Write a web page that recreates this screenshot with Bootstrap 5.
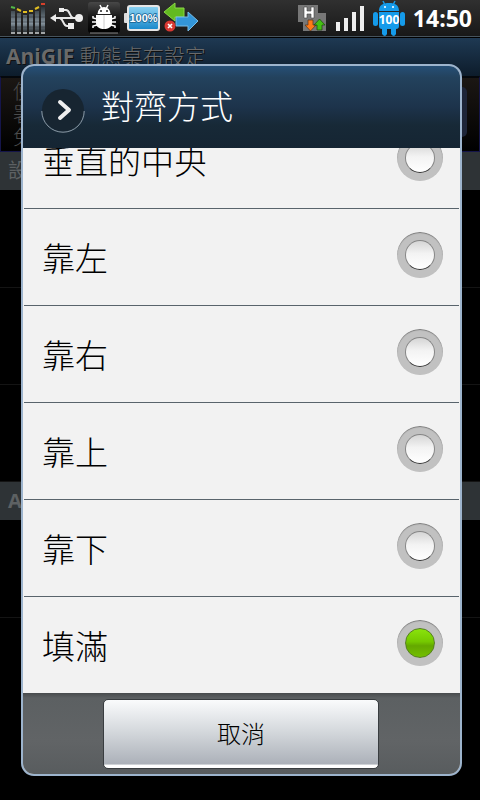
<!DOCTYPE html>
<html lang="zh-Hant">
<head>
<meta charset="utf-8">
<meta name="viewport" content="width=device-width, initial-scale=1">
<title>AniGIF 動態桌布設定</title>
<link href="https://cdn.jsdelivr.net/npm/bootstrap@5.3.0/dist/css/bootstrap.min.css" rel="stylesheet">
<style>
body{font-family:"Open Sans","Noto Sans CJK TC",sans-serif;background:#000;min-height:100vh}
.status-bar{height:36px;background:linear-gradient(#303030,#181818);padding:0 8px 0 10px;color:#fff}
.status-bar svg{display:block;flex:none}
.clock{font-size:23px;line-height:38px;font-weight:700}
.title-bar{height:40px;border-top:1px solid #46535c;background:linear-gradient(#1f3a54,#0d1c2b);box-shadow:inset 0 1px #000;padding:0 6px;font-size:21px;line-height:38px;color:#6a6a6a;text-shadow:1px 1px #111;font-weight:300}
.title-bar b{font-weight:700}
.pref-top{height:76px;border:1px solid #15154a;border-top:2px solid #05080c;background:linear-gradient(#1b1714,#000);padding:2px 12px;font-size:20px;line-height:23px;color:#4c4c4c;font-weight:300}
.pref-top .scroll-thumb{width:10px;height:50px;margin-top:7px;border-radius:6px;background:#1d2437}
.pref-text{width:24px}
.section-head{height:38px;margin-bottom:1px;background:#2e3336;color:#5d6163;font-size:20px;line-height:38px;padding:0 8px}
.pref-row{height:97px;border-bottom:1px solid #141414}
.overlay{padding:64px 18px 24px 21px}
.dialog{border:2px solid #9db4cd;border-radius:13px;background:#f2f2f2;overflow:hidden}
.dialog-head{height:82px;background:linear-gradient(#264f76,#23425d 14%,#1d334b 50%,#172937 72%,#152533);padding:0 18px;color:#fff}
.dialog-head h1{font-size:33px;line-height:40px;font-weight:300}
.option-list{min-height:0;background:#f2f2f2}
.option{height:97px;flex:none;margin:0 1px;padding:0 16px 0 18px;border-bottom:1px solid #59646c;color:#000;font-size:33px;line-height:48px;font-weight:300}
.option:last-child{height:96px;border-bottom:0}
.option label{padding-top:4px}
.radio-dot{appearance:none;width:46px;height:46px;margin:0 0 4px;border-radius:50%;background:radial-gradient(circle,transparent 14px,#c1c1c1 15px),linear-gradient(#cfcfcf,#fff 75%);box-shadow:inset 0 1px 1px #777;display:grid;place-items:center}
.radio-dot::before{content:"";width:30px;height:30px;border-radius:50%;border:1px solid #858585;border-bottom-color:#333;background:linear-gradient(#d5d5d5,#f3f3f3 45%,#fff)}
.radio-dot:checked::before{border-color:#557c25;background:linear-gradient(#8ae30c,#75c900 45%,#64a800 60%,#73bf00)}
.dialog-foot{height:81px;padding-right:1px;background:linear-gradient(#484b4d,#5c6062 5px,#616466 60%,#585c5e)}
.cancel-btn{width:276px;height:70px;border:1px solid #393d40;border-radius:5px;background:linear-gradient(#fafbfc,#d5d9dd 45%,#acb1b9 94%,#fff 96%);color:#000;font-size:24px;line-height:30px;font-weight:300}
</style>
</head>
<body class="d-flex flex-column position-relative">
<header class="status-bar d-flex align-items-center">
<svg width="36" height="32" viewBox="0 0 36 32"><defs><linearGradient id="eq" x2="0" y2="1"><stop stop-color="#2b343a"/><stop offset=".65" stop-color="#84929c"/><stop offset="1" stop-color="#2c3236"/></linearGradient></defs>
<g fill="url(#eq)"><path d="M1 9h4v21H1zM7 11h4v19H7zM13 13h4v17h-4zM19 12h4v18h-4zM25 9h4v21h-4zM31 5h4v25h-4z"/></g>
<path d="M1 31h4M7 31h4M13 31h4M19 31h4M25 31h4M31 31h4" stroke="#d0d3d5" stroke-width="1.5"/><path d="M1 15h34M1 20h34M1 25h34" stroke="#151719" stroke-width=".4"/>
<path d="M1 5l4 1" stroke="#54b948" stroke-width="2"/><path d="M7 7l4 2M13 10h4M19 9h4M25 7l4-2" stroke="#e0bd22" stroke-width="2"/><path d="M31 2h4" stroke="#d6402b" stroke-width="2"/></svg>
<svg class="ms-1" width="34" height="26" viewBox="0 0 34 26"><path d="M5 13h24M12 5h4c4 0 3 6 7 8M19 21h-2c-4 0-3-6-7-8" fill="none" stroke="#e8e8e8" stroke-width="2"/><path d="M0 13l6-4v8zM18 18h6v6h-6zM9 3h5v4H9z" fill="#eee"/><circle cx="29" cy="13" r="4" fill="#eee"/></svg>
<svg class="ms-1" width="32" height="32" viewBox="0 0 32 32"><defs><linearGradient id="bg" x2="0" y2="1"><stop stop-color="#484848"/><stop offset=".5" stop-color="#161616"/><stop offset="1" stop-color="#000"/></linearGradient></defs><rect width="32" height="31" rx="3" fill="url(#bg)"/><path d="M2 31h28" stroke="#888"/><path d="M12 3l2 4M20 3l-2 4M9 17L5 16v-2M23 17l4-1v-2M9 20H4M23 20h5M9 23l-4 1v2M23 23l4 1v2" fill="none" stroke="#fff" stroke-width="1.500"/><path d="M9.500 12a6.500 7 0 0 1 13 0zM8 13h16v8c0 8-16 8-16 0z" fill="#fff"/><path d="M16 13v14" stroke="#ccc"/><circle cx="13" cy="9" r="1" fill="#222"/><circle cx="19" cy="9" r="1" fill="#222"/></svg>
<svg class="ms-1" width="36" height="26" viewBox="0 0 36 26"><defs><linearGradient id="ba" x2="0" y2="1"><stop stop-color="#8ed4f3"/><stop offset="1" stop-color="#1687ca"/></linearGradient></defs><rect y="8" width="5" height="10" rx="1" fill="#ddd"/><rect x="4" y="1" width="31" height="24" rx="2" fill="url(#ba)" stroke="#e6e6e6" stroke-width="2"/><text x="19.500" y="17" text-anchor="middle" font-family="Liberation Sans" font-weight="700" font-size="11" fill="#fff" stroke="#176292" stroke-width="1.500" paint-order="stroke">100%</text></svg>
<svg class="ms-1" width="36" height="32" viewBox="0 0 36 32"><path d="M0 10L11 1v5h9v9h-9v4z" fill="#62ba20" stroke="#8bd846"/><path d="M34 19L24 10v5h-12v9h12v5z" fill="#3396d9" stroke="#76bde8"/><circle cx="6" cy="24" r="5.500" fill="#d63832"/><path d="M4 22l4 4m0-4l-4 4" stroke="#fff" stroke-width="1.600"/></svg>
<svg class="ms-auto me-2" width="30" height="28" viewBox="0 0 30 28"><path d="M1 1h20v8h8v18H6v-9H1z" fill="#777"/><path d="M7 3h3v4h4V3h3v11h-3v-4h-4v4H7z" fill="#fff" stroke="#444" stroke-width=".6"/><path d="M11 16h5v5h3l-5.500 6L8 21h3z" fill="#ff7a17" stroke="#573016" stroke-width=".7"/><path d="M20 26h5v-5h3l-5.500-6L17 21h3z" fill="#45bf14" stroke="#17430a" stroke-width=".7"/></svg>
<svg width="30" height="26" viewBox="0 0 30 26"><path d="M1 17h4v9H1zM9 13h4v13H9zM17 7h4v19h-4zM25 1h4v25h-4z" fill="#eee"/></svg>
<svg class="ms-2 me-2" width="32" height="36" viewBox="0 0 32 36"><g fill="#159bea"><path d="M6 11C6 5 10 3 16 3s10 2 10 8zM6 12h20v14q0 3-3 3H9q-3 0-3-3zM9 28h5v6q-2 4-5 0zM18 28h5v6q-2 4-5 0z"/><rect y="12" width="5" height="14" rx="2.500"/><rect x="27" y="12" width="5" height="14" rx="2.500"/></g><path d="M10 1l2 4M22 1l-2 4" stroke="#159bea" stroke-width="1.500"/><circle cx="12" cy="7" r="1" fill="#fff"/><circle cx="20" cy="7" r="1" fill="#fff"/><text x="16" y="24" text-anchor="middle" font-family="Open Sans" font-weight="700" font-size="12" fill="#fff">100</text></svg>
<time class="clock">14:50</time>
</header>
<main aria-hidden="true">
<div class="title-bar"><b>AniGIF</b> 動態桌布設定</div>
<div class="pref-top d-flex justify-content-between"><div class="pref-text">使<br>署<br>免</div><div class="scroll-thumb"></div></div>
<div class="section-head">設定</div>
<div class="pref-row"></div><div class="pref-row"></div><div class="pref-row"></div>
<div class="section-head"><b>A</b></div>
<div class="pref-row"></div>
</main>
<div class="overlay position-absolute top-0 start-0 w-100 h-100">
<section class="dialog d-flex flex-column h-100" role="dialog" aria-labelledby="dialog-title">
<div class="dialog-head d-flex flex-shrink-0 align-items-center gap-3">
<svg class="mt-2" width="44" height="44" viewBox="0 0 44 44"><circle cx="22" cy="21" r="21" fill="#172531"/><path d="M.8 22a21.200 21.200 0 0 0 42.400 0" fill="none" stroke="#8d9ca8"/><path d="M19 13l9 8-9 8" fill="none" stroke="#eee" stroke-width="4" stroke-linecap="round" stroke-linejoin="round"/></svg>
<h1 class="m-0" id="dialog-title">對齊方式</h1>
</div>
<div class="option-list d-flex flex-column justify-content-end flex-grow-1 overflow-hidden">
<div class="option d-flex align-items-center"><label class="flex-grow-1" for="o1">垂直的中央</label><input class="radio-dot" type="radio" name="align" id="o1"></div>
<div class="option d-flex align-items-center"><label class="flex-grow-1" for="o2">靠左</label><input class="radio-dot" type="radio" name="align" id="o2"></div>
<div class="option d-flex align-items-center"><label class="flex-grow-1" for="o3">靠右</label><input class="radio-dot" type="radio" name="align" id="o3"></div>
<div class="option d-flex align-items-center"><label class="flex-grow-1" for="o4">靠上</label><input class="radio-dot" type="radio" name="align" id="o4"></div>
<div class="option d-flex align-items-center"><label class="flex-grow-1" for="o5">靠下</label><input class="radio-dot" type="radio" name="align" id="o5"></div>
<div class="option d-flex align-items-center"><label class="flex-grow-1" for="o6">填滿</label><input class="radio-dot" type="radio" name="align" id="o6" checked></div>
</div>
<div class="dialog-foot d-flex flex-shrink-0 align-items-center justify-content-center"><button class="btn cancel-btn p-0" type="button">取消</button></div>
</section>
</div>
<script src="https://cdn.jsdelivr.net/npm/bootstrap@5.3.0/dist/js/bootstrap.bundle.min.js"></script>
</body>
</html>
